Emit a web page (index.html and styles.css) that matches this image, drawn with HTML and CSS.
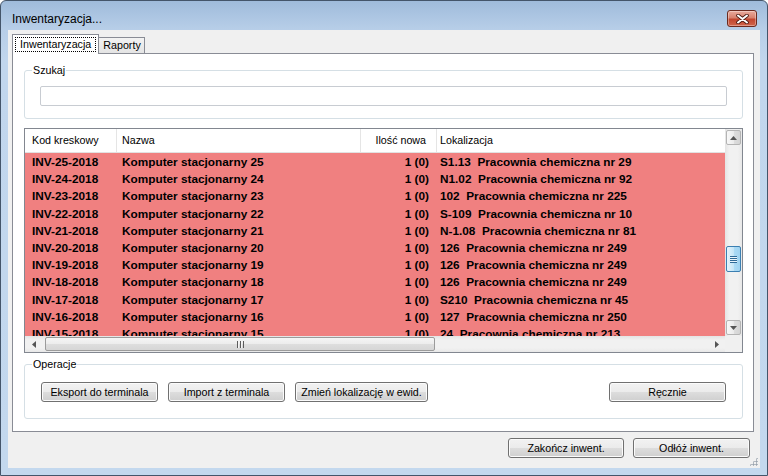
FILE: index.html
```html
<!DOCTYPE html>
<html lang="pl">
<head>
  <meta charset="UTF-8" />
  <meta name="viewport" content="width=device-width, initial-scale=1.0"/>
  <title>Inwentaryzacja...</title>
  <link rel="stylesheet" href="styles.css">
</head>
<body>
  <div class="window">
    <div class="titlebar">
      <span class="title">Inwentaryzacja...</span>
      <button class="close" title="Zamknij">
        <svg width="13" height="10" viewBox="0 0 13 10">
          <path d="M2 1.5 L11 8.5 M11 1.5 L2 8.5" stroke="#4a1810" stroke-width="3.6" stroke-linecap="round"/>
          <path d="M2 1.5 L11 8.5 M11 1.5 L2 8.5" stroke="#fff" stroke-width="2" stroke-linecap="round"/>
        </svg>
      </button>
    </div>

    <div class="client">
      <div class="tabs">
        <div class="tab active"><span class="focus">Inwentaryzacja</span></div>
        <div class="tab">Raporty</div>
      </div>

      <div class="tabpage">
        <fieldset class="group search">
          <legend>Szukaj</legend>
          <div class="search-body">
            <input type="text" id="search" />
          </div>
        </fieldset>

        <div class="listview">
          <div class="lv-view">
            <div class="lv-head">
              <span class="c1">Kod kreskowy</span>
              <span class="c2">Nazwa</span>
              <span class="c3">Ilość nowa</span>
              <span class="c4">Lokalizacja</span>
            </div>
            <div id="rows"></div>
          </div>

          <div class="vscroll">
            <div class="sb-btn">
              <svg width="7" height="4" viewBox="0 0 7 4"><polygon points="3.5,0 7,4 0,4" fill="#555"/></svg>
            </div>
            <div class="track">
              <div class="vthumb" style="margin-top:100px"><i class="grip-h"></i></div>
            </div>
            <div class="sb-btn">
              <svg width="7" height="4" viewBox="0 0 7 4"><polygon points="0,0 7,0 3.5,4" fill="#555"/></svg>
            </div>
          </div>

          <div class="hscroll">
            <div class="sb-arrow">
              <svg width="4" height="7" viewBox="0 0 4 7"><polygon points="4,0 4,7 0,3.5" fill="#555"/></svg>
            </div>
            <div class="track">
              <div class="hthumb" style="width:390px"><i class="grip-v"></i></div>
            </div>
            <div class="sb-arrow">
              <svg width="4" height="7" viewBox="0 0 4 7"><polygon points="0,0 4,3.5 0,7" fill="#555"/></svg>
            </div>
          </div>

          <div class="corner"></div>
        </div>

        <fieldset class="group ops">
          <legend>Operacje</legend>
          <div class="ops-body">
            <button class="btn">Eksport do terminala</button>
            <button class="btn">Import z terminala</button>
            <button class="btn wide">Zmień lokalizację w ewid.</button>
            <button class="btn manual">Ręcznie</button>
          </div>
        </fieldset>
      </div>

      <div class="footer">
        <button class="btn narrow">Zakończ inwent.</button>
        <button class="btn">Odłóż inwent.</button>
      </div>

      <div class="size-grip"></div>
    </div>
  </div>

  <script>
    const items = [
      ['INV-25-2018', 'Komputer stacjonarny 25', '1 (0)', 'S1.13  Pracownia chemiczna nr 29'],
      ['INV-24-2018', 'Komputer stacjonarny 24', '1 (0)', 'N1.02  Pracownia chemiczna nr 92'],
      ['INV-23-2018', 'Komputer stacjonarny 23', '1 (0)', '102  Pracownia chemiczna nr 225'],
      ['INV-22-2018', 'Komputer stacjonarny 22', '1 (0)', 'S-109  Pracownia chemiczna nr 10'],
      ['INV-21-2018', 'Komputer stacjonarny 21', '1 (0)', 'N-1.08  Pracownia chemiczna nr 81'],
      ['INV-20-2018', 'Komputer stacjonarny 20', '1 (0)', '126  Pracownia chemiczna nr 249'],
      ['INV-19-2018', 'Komputer stacjonarny 19', '1 (0)', '126  Pracownia chemiczna nr 249'],
      ['INV-18-2018', 'Komputer stacjonarny 18', '1 (0)', '126  Pracownia chemiczna nr 249'],
      ['INV-17-2018', 'Komputer stacjonarny 17', '1 (0)', 'S210  Pracownia chemiczna nr 45'],
      ['INV-16-2018', 'Komputer stacjonarny 16', '1 (0)', '127  Pracownia chemiczna nr 250'],
      ['INV-15-2018', 'Komputer stacjonarny 15', '1 (0)', '24  Pracownia chemiczna nr 213']
    ];

    function renderItems() {
      const rows = document.getElementById('rows');
      rows.innerHTML = items.map(([code, name, qty, loc]) =>
        `<div class="lv-row"><span class="c1">${code}</span><span class="c2">${name}</span><span class="c3">${qty}</span><span class="c4">${loc}</span></div>`
      ).join('');
    }

    renderItems();
  </script>
</body>
</html>
```

FILE: styles.css
```css
* {
  box-sizing: border-box;
}

body {
  margin: 0;
  font-family: "Liberation Sans", Arial, sans-serif;
  font-size: 10.7px;
  color: #000;
  background: #fff;
}

/* window frame */
.window {
  width: 768px;
  height: 476px;
  display: flex;
  flex-direction: column;
  padding: 0 7px 7px;
  border: 1px solid #44556a;
  border-radius: 6px 6px 0 0;
  background: linear-gradient(#9fbbdb, #b7cee8 28px, #c1d6ed 60px, #c3d8ee);
}

.titlebar {
  height: 29px;
  display: flex;
  align-items: flex-start;
  padding-left: 4px;
}

.title {
  margin-top: 11px;
  font-size: 12px;
  line-height: 14px;
}

.close {
  margin: 9px 3px 0 auto;
  width: 30px;
  height: 17px;
  padding: 0;
  border: 1px solid #6b2a1f;
  border-radius: 3px;
  background: linear-gradient(#e9ab9d, #d8816e 45%, #c2462f 55%, #d0654c);
  box-shadow: inset 0 0 0 1px rgba(255, 255, 255, 0.35);
  display: flex;
  align-items: center;
  justify-content: center;
}

.client {
  flex: 1;
  position: relative;
  display: flex;
  flex-direction: column;
  background: #f0f0f0;
}

/* tabs */
.tabs {
  height: 23px;
  display: flex;
  align-items: flex-end;
  padding-left: 4px;
}

.tab {
  height: 16px;
  margin-left: -1px;
  padding: 0 3px 0 4px;
  border: 1px solid #898c95;
  border-bottom: 0;
  background: linear-gradient(#f3f3f3, #e4e4e4);
  line-height: 15px;
}

.tab.active {
  height: 20px;
  margin: 0 0 -1px 0;
  padding: 2px 2px 0;
  background: #fff;
  position: relative;
  z-index: 1;
}

.focus {
  display: block;
  height: 15px;
  padding: 0 4px;
  border: 1px dotted #000;
  line-height: 13px;
}

.tabpage {
  height: 379px;
  margin: 0 6px 0 4px;
  border: 1px solid #898c95;
  background: #fff;
  display: flex;
  flex-direction: column;
}

/* group boxes */
.group {
  min-width: 0;
  margin: 0 10px 0 11px;
  padding: 0;
  border: 1px solid #d5dfe5;
  border-radius: 3px;
}

.group legend {
  margin-left: 7px;
  padding: 0 1px;
  line-height: 13px;
}

.search {
  margin-top: 10px;
}

.search-body {
  padding: 9px 15px 12px;
}

.search input {
  display: block;
  width: 100%;
  height: 20px;
  border: 1px solid #c8ccd2;
  border-radius: 2px;
  background: #fff;
}

/* list view */
.listview {
  margin: 9px 10px 0 11px;
  height: 225px;
  border: 1px solid #828790;
  display: grid;
  grid-template-columns: minmax(0, 1fr) 17px;
  grid-template-rows: minmax(0, 1fr) 16px;
  background: #fff;
}

.lv-view {
  overflow: hidden;
}

.lv-head,
.lv-row {
  display: grid;
  grid-template-columns: 92px 244px 76px 288px;
  white-space: pre;
}

.lv-head {
  height: 24px;
  border-bottom: 1px solid #e2e2e2;
  line-height: 23px;
}

.lv-head span {
  border-right: 1px solid #e5e5e5;
}

.lv-head .c4 {
  border-right: 0;
}

.lv-row {
  height: 17.2px;
  line-height: 18.6px;
  background: #f08080;
  font-weight: bold;
  font-size: 11.8px;
}

.lv-row span,
.lv-head span {
  overflow: hidden;
}

.c1 {
  padding-left: 7px;
}

.c2 {
  padding-left: 5px;
}

.c3 {
  text-align: right;
  padding-right: 8px;
}

.lv-head .c3 {
  padding-right: 10px;
}

.c4 {
  padding-left: 3px;
}

/* scroll bars */
.vscroll {
  display: flex;
  flex-direction: column;
  background: linear-gradient(to right, #e4e4e4, #f1f1f1 25%, #f1f1f1 75%, #e8e8e8);
}

.vscroll .track {
  flex: 1;
}

.sb-btn {
  height: 15px;
  margin: 1px;
  border: 1px solid #b4b4b4;
  border-radius: 2px;
  background: linear-gradient(to right, #f8f8f8, #ececec 50%, #dedede 50%, #d4d4d4);
  display: flex;
  align-items: center;
  justify-content: center;
}

.vthumb {
  height: 26px;
  margin: 0 1px;
  border: 1px solid #3c7fb1;
  border-radius: 2px;
  background: linear-gradient(to right, #e5f4fc, #c6e6f7 50%, #acdbf5 50%, #9fd3f1);
  display: flex;
  align-items: center;
  justify-content: center;
}

.grip-h {
  width: 7px;
  height: 7px;
  background: repeating-linear-gradient(#2f6a97 0 1px, #eaf6fd 1px 2px);
}

.hscroll {
  display: flex;
  background: linear-gradient(#e4e4e4, #f1f1f1 25%, #f1f1f1 75%, #e8e8e8);
}

.sb-arrow {
  width: 17px;
  display: flex;
  align-items: center;
  justify-content: center;
}

.hscroll .track {
  flex: 1;
  padding: 1px 0 0 3px;
}

.hthumb {
  height: 14px;
  border: 1px solid #9b9b9b;
  border-radius: 2px;
  background: linear-gradient(#f6f6f6, #ececec 50%, #dedede 50%, #d6d6d6);
  display: flex;
  align-items: center;
  justify-content: center;
}

.grip-v {
  width: 7px;
  height: 7px;
  background: repeating-linear-gradient(to right, #5c5c5c 0 1px, #f4f4f4 1px 2px, transparent 2px 3px);
}

.corner {
  background: #f0f0f0;
}

/* operations */
.ops {
  margin-top: 5px;
}

.ops-body {
  display: flex;
  gap: 10px;
  padding: 11px 16px 16px;
}

.btn {
  width: 117px;
  height: 20px;
  padding: 0;
  border: 1px solid #707070;
  border-radius: 3px;
  background: linear-gradient(#f2f2f2, #ebebeb 50%, #dddddd 50%, #cfcfcf);
  box-shadow: inset 0 0 0 1px #fbfbfb;
  font: inherit;
  color: #000;
}

.btn.wide {
  width: 133px;
}

.btn.manual {
  margin-left: auto;
}

.btn.narrow {
  width: 116px;
}

.footer {
  display: flex;
  justify-content: flex-end;
  gap: 9px;
  margin: 6px 10px 0 0;
}

.size-grip {
  position: absolute;
  right: 2px;
  bottom: 2px;
  width: 9px;
  height: 9px;
  background: radial-gradient(circle, #9aa4ae 0.9px, transparent 1.3px) 0 0 / 3px 3px;
  clip-path: polygon(100% 0, 100% 100%, 0 100%);
}
```
